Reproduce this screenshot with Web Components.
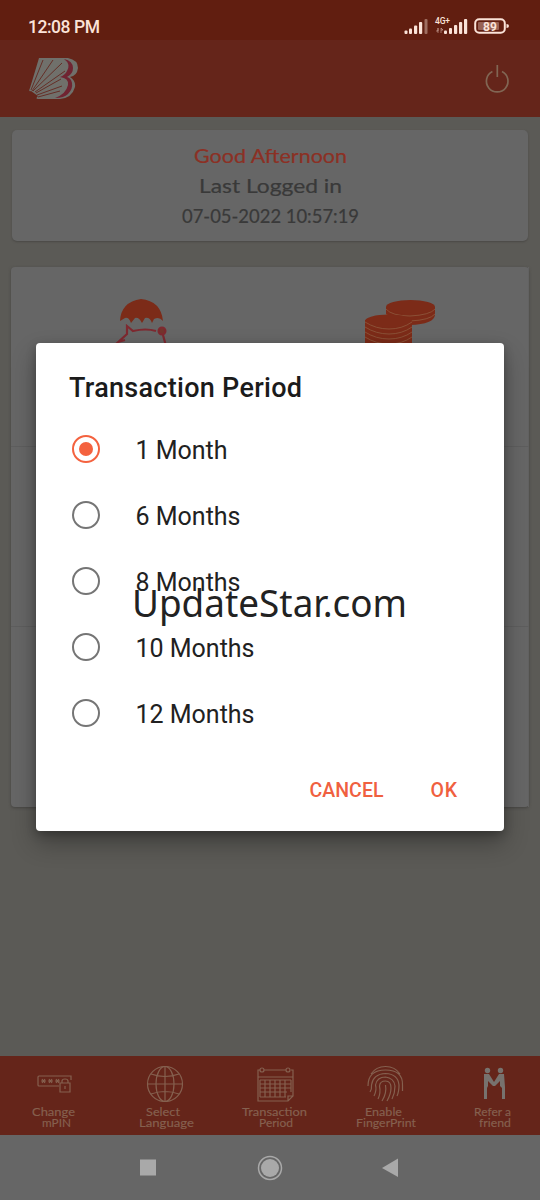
<!DOCTYPE html>
<html lang="en"><head><meta charset="utf-8"><title>Transaction Period</title>
<style>html,body{margin:0;height:1200px;overflow:hidden}body{font-family:Roboto,"Liberation Sans",sans-serif;background:#5b5a56}</style></head>
<body><bank-app></bank-app>
<script>
const define=(name,html,init)=>customElements.define(name,class extends HTMLElement{
  connectedCallback(){
    if(this.shadowRoot)return;
    const t=document.createElement('template');
    t.innerHTML=typeof html==='function'?html(this):html;
    this.attachShadow({mode:'open'}).append(t.content.cloneNode(true));
    if(init)init(this);
  }
});

// One line of text fitted to the width given in "w": tracked, or widened when "wide" is set.
define('fit-text','<style>:host{display:block;white-space:nowrap}span{display:inline-block;transform-origin:0 50%}</style><span><slot></slot></span>',el=>{
  const s=el.shadowRoot.querySelector('span'),w=+el.getAttribute('w'),now=s.getBoundingClientRect().width;
  if(el.hasAttribute('wide')){s.style.transform=`scaleX(${w/now})`;s.style.marginRight=w-now+'px';return}
  const d=(w-now)/(el.textContent.length-1);
  s.style.letterSpacing=d+'px';s.style.marginRight=-d+'px';
});

define('status-bar',`<style>:host{display:flex;height:40px;background:#611e10;color:#fbe3d8;align-items:center;padding:13px 30px 0 28px;box-sizing:border-box;justify-content:space-between}
fit-text{font:500 17.5px/26px Roboto,sans-serif}svg{display:block}</style>
<fit-text w="72">12:08 PM</fit-text>
<svg width="106" height="22" viewBox="404 16 106 22" fill="#fbe3d8"><g><rect x="404.500" y="30.500" width="3" height="3.500" rx="1"/><rect x="409" y="28.500" width="3" height="5.500" rx="1"/><rect x="414" y="25.500" width="3.200" height="8.500" rx="1"/><rect x="419" y="22" width="3.200" height="12" rx="1"/><rect x="424.500" y="19" width="3" height="15" rx="1" opacity=".4"/></g>
<text x="435" y="24" font-family="Roboto" font-weight="500" font-size="8.500" textLength="15">4G+</text>
<path d="M436 31h2v-3M438 28v5M441 33v-5l2 2h-2" fill="none" stroke="#fbe3d8" opacity=".55" stroke-width=".8"/>
<rect x="444" y="30.500" width="3" height="3.500" rx="1"/><rect x="449" y="28" width="3" height="6" rx="1"/><rect x="454" y="25" width="3.200" height="9" rx="1"/><rect x="459" y="22" width="3.200" height="12" rx="1"/><rect x="464" y="19" width="3.200" height="15" rx="1"/>
<rect x="475.200" y="19.200" width="29.600" height="13.600" rx="4" fill="none" stroke="#fbe3d8" stroke-width="2"/><rect x="478" y="22" width="21" height="8" rx="1" opacity=".35"/><path d="M506.500 24q2.500 0 2.500 2t-2.500 2z"/>
<text x="490" y="30.500" text-anchor="middle" font-family="Roboto" font-weight="700" font-size="12">89</text></svg>`);

define('app-header',`<style>:host{display:flex;height:77px;background:#65251a;justify-content:space-between;align-items:flex-start;padding:16px 29px 0;box-sizing:border-box}svg{display:block}</style>
<svg width="51" height="44" viewBox="29 56 51 44"><path d="M39 58H68Q78 60 78 68Q77 76 70 77Q76 81 75 87Q72 98 60 99H38Q35 99 38 96L31 91Q28 92 30 88Z" fill="#70706b"/><path d="M64 59Q71 64 67 71Q65 75 60 77Q69 78 68 85Q66 94 55 98Q64 98 68 94Q73 89 72 83Q71 78 67 77Q73 74 73 68Q73 61 64 59Z" fill="#702431"/><path d="M31 90L43 60M32 91L53 60M33 91L62 63M35 92L65 71M36 93L61 79M37 95L62 86M38 97L60 91" stroke="#652f27" stroke-width="1"/></svg>
<svg width="28" height="30" viewBox="484 63 28 30" style="margin-right:-1px;margin-top:7px"><path d="M492.400 71.500A10.800 10.800 0 1 0 502 71.500M497.300 65V77" fill="none" stroke="#816654" stroke-width="1.700"/></svg>`);

define('greeting-card',`<style>:host{display:flex;flex-direction:column;align-items:center;box-sizing:border-box;height:111px;margin:13px 12px 0;background:#666;border-radius:5px;padding-top:11px;box-shadow:0 1px 2px #4a4946;color:#393939;-webkit-text-stroke:.2px}
fit-text{font:400 18.500px/30px Lato,sans-serif}.g{color:#8c3024}</style>
<fit-text wide class="g" w="153">Good Afternoon</fit-text><fit-text wide w="143">Last Logged in</fit-text><fit-text wide w="177">07-05-2022 10:57:19</fit-text>`);

define('service-grid',`<style>:host{display:grid;grid-template-columns:1fr 1fr;grid-template-rows:180px 180px 180px;height:540px;margin:26px 11px 0;background:#666;border-radius:4px;box-shadow:0 1px 3px #454441}
div{box-sizing:border-box;border-bottom:1px solid #5e5e5e;padding-top:30px}div:nth-child(odd){border-right:1px solid #626262}div:nth-last-child(-n+2){border-bottom:0}svg{display:block;margin:auto}</style>
<div><svg width="60" height="64" viewBox="110 297 60 64"><path d="M119 321Q120 302 140 299Q160 301 162 321Q158 316 153 319L151 323Q149 317 144 318L141 323Q138 317 134 318L130 323Q128 317 124 318Z" fill="#7c2b18"/><path d="M115 344L126 334V326L132 331Q145 328 155 331M162 335L165 346M117 342L124 340" fill="none" stroke="#7e2930" stroke-width="2.200"/><circle cx="161" cy="331" r="3.500" fill="#74342d" stroke="#7e2930" stroke-width="2"/></svg></div>
<div><svg width="74" height="64" viewBox="362 297 74 64"><g fill="#7c2b18" stroke="#916044" stroke-width=".7"><path d="M365 320V360H412V320Z" stroke="none"/><path d="M386 307V317Q388 324 410 325Q434 324 435 315V307Z" stroke="none"/><path d="M386 314Q392 321 410 321Q430 320 435 314M386 309Q392 316 410 316Q430 315 435 309" fill="none"/><ellipse cx="410.500" cy="307" rx="24.500" ry="7" stroke="none"/><ellipse cx="388.500" cy="321" rx="23.500" ry="6.500" stroke="none"/><path d="M365 322Q376 329 389 329T412 322M365 327Q376 334 389 334T412 327M365 332Q376 339 389 339T412 332M365 337Q376 344 389 344T412 337" fill="none"/></g></svg></div><div></div><div></div><div></div><div></div>`);

define('nav-item',el=>`<style>:host{display:flex;flex-direction:column;align-items:center;color:#85604f}
::slotted(svg){display:block;margin-bottom:4px;transform:translateX(-1px)}fit-text{font:400 11px/11px Lato,sans-serif;-webkit-text-stroke:.15px}.a{transform:translateX(${el.getAttribute('shift')||0}px)}</style>
<slot></slot><fit-text wide class="a" w="${el.getAttribute('w1')}">${el.getAttribute('l1')}</fit-text><fit-text wide w="${el.getAttribute('w2')}">${el.getAttribute('l2')}</fit-text>`);

define('bottom-nav',`<style>:host{display:grid;grid-template-columns:112px 108px 112px 108px 100px;height:79px;background:#65251a;padding-top:8px;box-sizing:border-box}
svg{fill:none;stroke:#85604f;stroke-width:1.200}nav-item:last-child{padding-left:10px}</style>
<nav-item l1="Change" l2="mPIN" w1="43" w2="29" shift="-3"><svg width="40" height="38" viewBox="35 1063 40 38"><path d="M59 1085H39Q38 1085 38 1084V1076Q38 1075 39 1075H71V1079M60 1082H70V1091H60ZM62 1082V1080Q62 1078 65 1078T68 1080V1082M65 1085V1088M41 1080H46M42 1078L45 1082M45 1078L42 1082M48 1080H53M49 1078L52 1082M52 1078L49 1082M55 1080H60M56 1078L59 1082M59 1078L56 1082"/></svg></nav-item>
<nav-item l1="Select" l2="Language" w1="34" w2="55" shift="-3"><svg width="40" height="38" viewBox="145 1063 40 38"><circle cx="165" cy="1083" r="17.500"/><ellipse cx="165" cy="1083" rx="9" ry="17.500"/><path d="M165 1065V1101M147 1083H183M151 1073Q165 1078 179 1073M151 1093Q165 1088 179 1093"/></svg></nav-item>
<nav-item l1="Transaction" l2="Period" w1="65" w2="34" shift="-2"><svg width="40" height="38" viewBox="255 1063 40 38"><path d="M260 1069H258V1100H288L293 1095V1069H291M264 1069H286M258 1076H293M288 1100V1095H293"/><circle cx="262" cy="1069" r="2"/><circle cx="288" cy="1069" r="2"/><path d="M260 1079H291M260 1083H291M260 1087H291M260 1091H287M260 1096H286M260 1079V1096M265 1079V1096M270 1079V1096M275 1079V1096M280 1079V1096M285 1079V1096M291 1079V1091"/></svg></nav-item>
<nav-item l1="Enable" l2="FingerPrint" w1="37" w2="60" shift="-3"><svg width="40" height="38" viewBox="364 1063 40 38"><path d="M370 1073Q375 1065.500 384.500 1065.500T399 1073M367 1085Q367 1069 384.500 1069T401.500 1084V1090M369 1091Q371 1088 370.500 1084Q372 1073 384.500 1072.500Q397 1073 398 1084Q398 1091 396 1095M373 1095Q376 1089 374.500 1084Q376 1076 384.500 1076Q393 1077 394 1085Q394 1092 391 1098M377 1098Q380 1092 378.500 1085Q379 1080 384.500 1080T390 1087Q390 1093 386 1100M381 1100Q386 1092 384.500 1084"/></svg></nav-item>
<nav-item l1="Refer a" l2="friend" w1="37" w2="32" shift="-3"><svg width="40" height="38" viewBox="475 1063 40 38"><g fill="#77726e" stroke="none"><circle cx="488.500" cy="1069.500" r="2.700"/><circle cx="501.500" cy="1069.500" r="2.700"/><path d="M485 1073H490L495 1081L500 1073H505L506 1086V1098H503V1087L501 1085V1080L496 1085H494L489 1080V1085L488 1087V1098H485Z"/></g></svg></nav-item>`);

define('system-nav',`<style>:host{display:flex;height:65px;background:#666;justify-content:center;align-items:center}svg{display:block}</style>
<svg width="270" height="30" viewBox="135 1153 270 30" fill="#a9a9a9"><rect x="140" y="1159.500" width="16" height="16"/><circle cx="270" cy="1168" r="9"/><circle cx="270" cy="1168" r="11.500" fill="none" stroke="#a9a9a9" stroke-width="1.500"/><path d="M382 1168L398 1158.500V1177Z"/></svg>`);

define('radio-option',el=>`<style>:host{display:flex;align-items:center;height:66px;gap:36px;color:#212121}i{box-sizing:border-box;width:28px;height:28px;border:2.900px solid #757575;border-radius:50%;display:grid;place-items:center}
:host([checked]) i{border-color:#f4623f}:host([checked]) i::after{content:"";width:14px;height:14px;border-radius:50%;background:#f4623f}
fit-text{font:400 25px/30px Roboto,sans-serif;padding-top:3px}</style><i></i><fit-text w="${el.getAttribute('w')}">${el.textContent}</fit-text>`);

define('period-dialog',`<style>:host{display:flex;flex-direction:column;box-sizing:border-box;width:468px;height:488px;background:#fff;border-radius:4px;box-shadow:0 12px 24px rgba(0,0,0,.3),0 3px 10px rgba(0,0,0,.25);padding:28px 35px 0}
.t{font:500 27px/34px Roboto,sans-serif;color:#1b1b1b;margin-left:-2px}.list{margin:11px 0 0 .5px}
footer{display:flex;justify-content:flex-end;gap:47px;padding:31px 12px 0 0;color:#f0603f;font:500 19.500px/28px Roboto,sans-serif}</style>
<fit-text class="t" w="233">Transaction Period</fit-text>
<div class="list"><radio-option checked w="92">1 Month</radio-option><radio-option w="105">6 Months</radio-option><radio-option w="105">8 Months</radio-option><radio-option w="119">10 Months</radio-option><radio-option w="119">12 Months</radio-option></div>
<footer><fit-text w="74">CANCEL</fit-text><fit-text w="26.500">OK</fit-text></footer>`);

define('bank-app',`<style>:host{display:flex;flex-direction:column;height:1200px;width:540px;position:relative;background:#5b5a56}
bottom-nav{margin-top:auto}period-dialog{position:absolute;left:36px;top:343px}.mark{position:absolute;left:132px;top:577px;font:400 38px/50px "Noto Sans",sans-serif;color:#222}</style>
<status-bar></status-bar><app-header></app-header><greeting-card></greeting-card><service-grid></service-grid><bottom-nav></bottom-nav><system-nav></system-nav>
<period-dialog></period-dialog><fit-text wide class="mark" w="275">UpdateStar.com</fit-text>`);
</script></body></html>
